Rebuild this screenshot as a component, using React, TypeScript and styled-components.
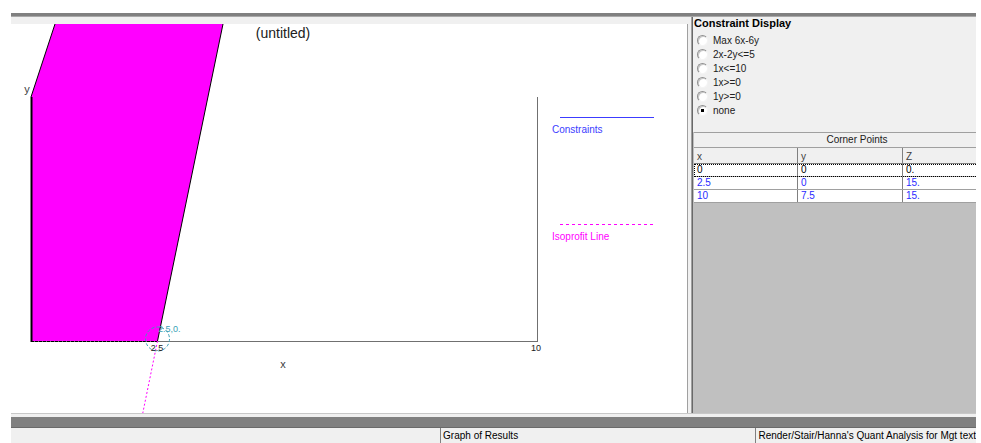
import React from 'react';
import styled, { createGlobalStyle } from 'styled-components';

const GlobalStyle = createGlobalStyle`
  body {
    margin: 0;
    background: #fff;
    font-family: "Liberation Sans", Arial, sans-serif;
  }
`;

const constraints = ['Max 6x-6y', '2x-2y<=5', '1x<=10', '1x>=0', '1y>=0', 'none'];
const selected = 'none';

const corners = [
  { x: '0', y: '0', z: '0.', focus: true },
  { x: '2.5', y: '0', z: '15.', focus: false },
  { x: '10', y: '7.5', z: '15.', focus: false },
];

// plot scale: x 0..10 maps onto 20..526 in the canvas
const X0 = 20;
const Y0 = 317;
const XMAX = 526;

const Graph = () => (
  <svg width={676} height={389} style={{ display: 'block' }}>
    <g fontFamily='"Liberation Sans", Arial, sans-serif'>
      <text x={272} y={14} fontSize={14} textAnchor="middle" fill="#202020">(untitled)</text>

      {/* feasible region */}
      <polygon points={`44,0 212,0 146.5,${Y0} ${X0},${Y0} ${X0},73`} fill="#ff00ff" stroke="none" />
      <line x1={44} y1={0} x2={X0} y2={73} stroke="#000" />
      <line x1={212} y1={0} x2={146.5} y2={Y0} stroke="#000" />

      {/* axes */}
      <line x1={X0} y1={Y0 + 0.5} x2={XMAX} y2={Y0 + 0.5} stroke="#707070" />
      <line x1={XMAX + 0.5} y1={73} x2={XMAX + 0.5} y2={Y0 + 1} stroke="#707070" />
      <line x1={X0 + 0.5} y1={73} x2={X0 + 0.5} y2={Y0 + 1} stroke="#000" strokeWidth={2} />
      <line x1={X0} y1={Y0 + 0.5} x2={146} y2={Y0 + 0.5} stroke="#000" strokeDasharray="3 1" />

      {/* isoprofit line through the optimum */}
      <line x1={146.5} y1={Y0} x2={131.8} y2={389} stroke="#ff00ff" strokeDasharray="2 2" />

      {/* optimum marker */}
      <circle cx={146.5} cy={315} r={12} fill="none" stroke="#3a9fb5" strokeDasharray="3 2" />
      <text x={147} y={308} fontSize={9} fill="#3a9fb5">2.5,0.</text>

      <text x={16} y={69} fontSize={11} textAnchor="middle" fill="#404040">y</text>
      <text x={272} y={344} fontSize={11} textAnchor="middle" fill="#404040">x</text>
      <text x={146} y={327} fontSize={9} textAnchor="middle" fill="#202020">2.5</text>
      <text x={525} y={327} fontSize={9} textAnchor="middle" fill="#202020">10</text>

      {/* legend */}
      <rect x={549} y={93} width={94} height={1} fill="#3c3cff" />
      <text x={541} y={109} fontSize={10} fill="#3c3cff">Constraints</text>
      <line x1={549} y1={200.5} x2={643} y2={200.5} stroke="#ff00ff" strokeDasharray="3 3" />
      <text x={541} y={216} fontSize={10} fill="#ff00ff">Isoprofit Line</text>
    </g>
  </svg>
);

const App = () => (
  <>
    <GlobalStyle />
    <Window>
      <TopBar />
      <Main>
        <ChartPane>
          <Canvas>
            <Graph />
          </Canvas>
        </ChartPane>
        <Splitter />
        <SidePanel>
          <ConstraintBox>
            <BoxTitle>Constraint Display</BoxTitle>
            <RadioList>
              {constraints.map((c) => (
                <RadioRow key={c}>
                  <Radio $checked={c === selected} />
                  <span>{c}</span>
                </RadioRow>
              ))}
            </RadioList>
          </ConstraintBox>
          <Grid>
            <GridCaption>Corner Points</GridCaption>
            <HeaderRow>
              <HeadCell>x</HeadCell>
              <HeadCell>y</HeadCell>
              <HeadCell>Z</HeadCell>
            </HeaderRow>
            {corners.map((r) => (
              <DataRow key={r.x} $focus={r.focus}>
                <DataCell>{r.x}</DataCell>
                <DataCell>{r.y}</DataCell>
                <DataCell>{r.z}</DataCell>
              </DataRow>
            ))}
          </Grid>
        </SidePanel>
      </Main>
      <BottomEdge />
      <DarkBar />
      <StatusBar>
        <StatusPanel $width={430} />
        <StatusPanel $width={316}>Graph of Results</StatusPanel>
        <StatusPanel>Render/Stair/Hanna's Quant Analysis for Mgt text</StatusPanel>
      </StatusBar>
    </Window>
  </>
);

export default App;

const Window = styled.div`
  margin: 13px 0 0 11px;
  width: 965px;
  height: 430px;
  display: flex;
  flex-direction: column;
  overflow: hidden;
`

const TopBar = styled.div`
  height: 3px;
  background: #808080;
  border-bottom: 1px solid #a8a8a8;
`

const Main = styled.div`
  height: 396px;
  display: flex;
`

const ChartPane = styled.div`
  width: 677px;
  padding-top: 7px;
  box-sizing: border-box;
  background: #f0f0f0;
  display: flex;
`

const Canvas = styled.div`
  flex: 1;
  background: #fff;
  border-right: 1px solid #a0a0a0;
  overflow: hidden;
`

const Splitter = styled.div`
  width: 5px;
  background: linear-gradient(to right, #f0f0f0 0 3px, #a0a0a0 3px 4px, #696969 4px 5px);
`

const SidePanel = styled.div`
  width: 283px;
  display: flex;
  flex-direction: column;
  background: #c0c0c0;
  overflow: hidden;
`

const ConstraintBox = styled.div`
  height: 115px;
  background: #f0f0f0;
  padding-left: 1px;
  box-sizing: border-box;
`

const BoxTitle = styled.div`
  font-size: 11px;
  font-weight: bold;
  line-height: 13px;
  color: #000;
`

const RadioList = styled.div`
  margin-top: 3px;
  display: flex;
  flex-direction: column;
`

const RadioRow = styled.div`
  height: 14px;
  display: flex;
  align-items: center;
  gap: 5px;
  padding-left: 3px;
  font-size: 10px;
  color: #202020;
`

// sunken classic radio: dark upper-left arc, light lower-right arc
const Radio = styled.span<{ $checked?: boolean }>`
  width: 11px;
  height: 11px;
  box-sizing: border-box;
  border-radius: 50%;
  border: 1px solid #f4f4f4;
  border-top-color: #909090;
  border-left-color: #909090;
  background: radial-gradient(circle, ${(p) => (p.$checked ? '#000 0 1.8px' : '#fff 0 1.8px')}, #fff 2px);
  box-shadow: inset 1px 1px 0 #c8c8c8;
`

const Grid = styled.div`
  width: 326px;
  margin-left: 1px;
  border-top: 1px solid #a0a0a0;
  font-size: 10px;
`

const GridCaption = styled.div`
  height: 14px;
  line-height: 14px;
  text-align: center;
  background: #f0f0f0;
  color: #202020;
  border-bottom: 1px solid #a0a0a0;
`

const HeaderRow = styled.div`
  display: grid;
  grid-template-columns: 104px 105px 1fr;
  height: 15px;
  background: #f0f0f0;
  border-bottom: 1px solid #808080;
`

const HeadCell = styled.div`
  border-right: 1px solid #808080;
  padding: 3px 0 0 3px;
  color: #404040;
`

const DataRow = styled.div<{ $focus?: boolean }>`
  display: grid;
  grid-template-columns: 104px 105px 1fr;
  height: 12px;
  background: #fff;
  border-bottom: 1px solid #a0a0a0;
  color: ${(p) => (p.$focus ? '#000' : '#2a2aff')};
  outline: ${(p) => (p.$focus ? '1px dotted #000' : 'none')};
  outline-offset: -1px;
`

const DataCell = styled.div`
  border-right: 1px solid #808080;
  padding-left: 3px;
  line-height: 12px;
`

const BottomEdge = styled.div`
  height: 3px;
  background: #f0f0f0;
  border-top: 1px solid #c8c8c8;
`

const DarkBar = styled.div`
  height: 10px;
  background: #808080;
  border-bottom: 1px solid #6a6a6a;
`

const StatusBar = styled.div`
  height: 15px;
  display: flex;
  background: #f0f0f0;
  font-size: 10px;
  color: #000;
`

const StatusPanel = styled.div<{ $width?: number }>`
  ${(p) => (p.$width ? `width: ${p.$width}px;` : 'flex: 1;')}
  box-sizing: border-box;
  padding: 2px 0 0 2px;
  white-space: nowrap;
  &:not(:first-child) {
    border-left: 1px solid #808080;
  }
`
